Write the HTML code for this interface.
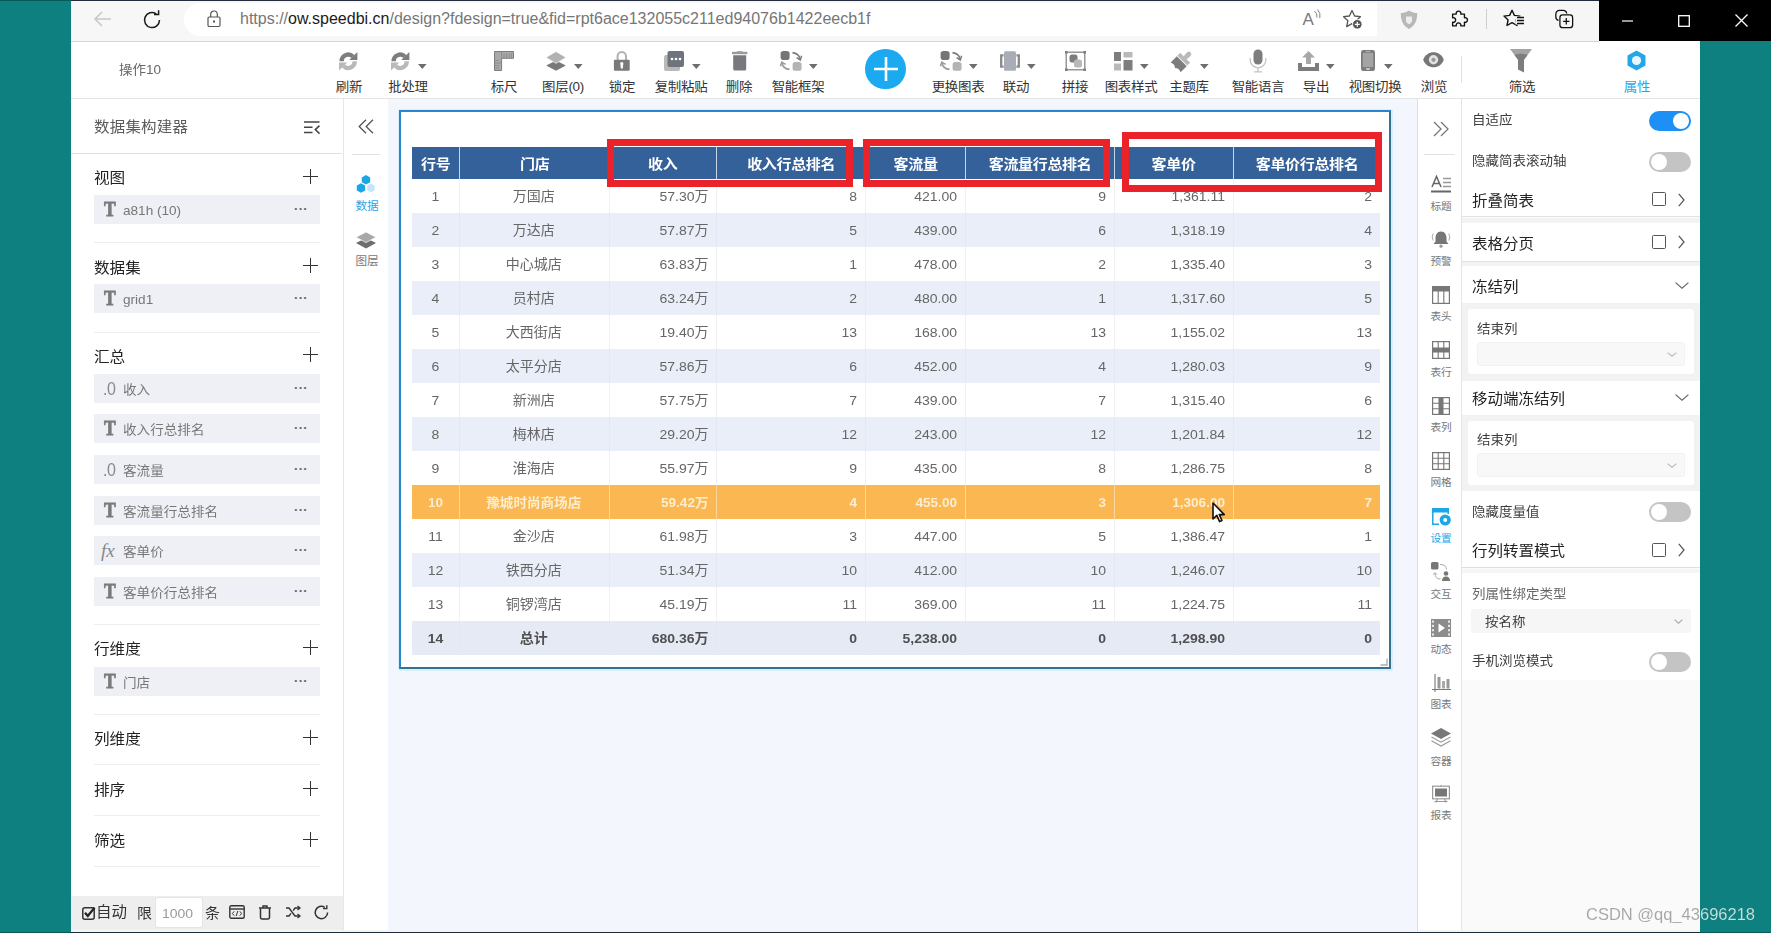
<!DOCTYPE html><html lang="zh"><head><meta charset="utf-8"><title>speedbi design</title><style>
*{box-sizing:border-box;margin:0;padding:0}
html,body{width:1771px;height:933px;overflow:hidden}
body{background:#0f8080;font-family:"Liberation Sans","Noto Sans CJK SC",sans-serif;color:#333;position:relative;font-size:13px}
.abs{position:absolute}
.t{position:absolute;white-space:nowrap;line-height:1}
svg{position:absolute;overflow:visible}
/* toolbar */
.tl{position:absolute;top:79px;font-size:12.64px;color:#333;white-space:nowrap;transform:translateX(-50%) scaleX(1.068);line-height:16px;letter-spacing:-0.3px}
/* left panel */
.sec{position:absolute;left:94px;font-size:14.61px;transform:scaleX(1.068);transform-origin:0 50%;color:#222;line-height:16px;white-space:nowrap}
.plus{position:absolute;left:303px;width:15px;height:15px}
.plus:before{content:"";position:absolute;left:0;top:7px;width:15px;height:1.4px;background:#333}
.plus:after{content:"";position:absolute;top:0;left:7px;height:15px;width:1.4px;background:#333}
.item{position:absolute;left:94px;width:226px;height:29px;background:#eef0f6;font-size:12.73px;color:#777;line-height:29px;white-space:nowrap}
.item .ic{position:absolute;left:10px;top:0;font-family:"Liberation Serif",serif;font-weight:bold;font-size:17.5px;color:#7a7a7a;-webkit-text-stroke:0.7px #7a7a7a;transform:scaleY(1.18);transform-origin:50% 55%}
.item .ic.n{font-family:"Liberation Sans",sans-serif;font-weight:normal;font-size:16px;left:9px;letter-spacing:-0.5px;transform:scaleY(1.15);-webkit-text-stroke:0;color:#888}
.item .ic.f{font-style:italic;font-weight:normal;font-size:19px;left:7px;transform:none;-webkit-text-stroke:0;color:#888}
.item .nm{position:absolute;left:29px;top:1px;transform:scaleX(1.068);transform-origin:0 50%}
.item .dots{position:absolute;left:200px;top:-1px;font-size:13px;color:#666;font-weight:bold;letter-spacing:0.3px}
.hsep{position:absolute;left:94px;width:226px;height:1px;background:#eeeeee}
/* side icon labels */
.sl{position:absolute;font-size:10px;color:#777;white-space:nowrap;transform:translateX(-50%) scaleX(1.068);line-height:12px;letter-spacing:-0.2px}
/* right panel */
.rl{position:absolute;left:1472px;font-size:13px;color:#3c3c3c;transform:scaleX(1.068);transform-origin:0 50%;white-space:nowrap;line-height:16px}
.rl.b{font-size:15px;color:#222}
.tog{position:absolute;left:1649px;width:42px;height:20px;border-radius:10px;background:#c4c4c4}
.tog:after{content:"";position:absolute;left:2px;top:2px;width:16px;height:16px;border-radius:8px;background:#fff}
.tog.on{background:#1e90f5}
.tog.on:after{left:24px}
.cb{position:absolute;left:1652px;width:14px;height:14px;border:1.3px solid #555;border-radius:1.5px;background:#fff}
/* table */
.th{position:absolute;top:147px;height:32px;background:#35619b;color:#fff;font-weight:bold;font-size:14.04px;line-height:35.2px;text-align:center;white-space:nowrap;letter-spacing:-0.3px;overflow:hidden}
.th span{display:inline-block;transform:scaleX(1.068)}
.sx{transform:scaleX(1.068);transform-origin:0 50%}
.tr{position:absolute;left:412px;width:968px;height:33.95px}
.tr.alt{background:#e9eef9}
.tr.hl{background:#fbb752;color:#fdf0d8;font-weight:bold}
.tr.tot{background:#e6eaf5;font-weight:bold;color:#444}
.td{position:absolute;top:0;height:33.95px;line-height:36.6px;overflow:hidden;font-size:13.11px;color:#666;white-space:nowrap}
.tr.hl .td{color:#fdeecf;font-size:12.7px}
.tr.tot .td{color:#505050}
.td.c{text-align:center;transform:scaleX(1.068)}
.td.r{text-align:right;padding-right:7.5px;transform:scaleX(1.068);transform-origin:100% 50%}
.vs{position:absolute;top:0;width:1px;height:33.95px;background:rgba(255,255,255,.55)}
</style></head><body>
<div class="abs" style="left:71px;top:0;width:1629px;height:933px;background:#fff"></div>
<div class="abs" style="left:71px;top:0;width:1528px;height:42px;background:#f7f7f7;border-bottom:1px solid #d6d6d6"></div>
<div class="abs" style="left:0;top:0;width:1771px;height:1px;background:rgba(0,0,0,.3)"></div>
<div class="abs" style="left:71px;top:0;width:1700px;height:1px;background:#232c3c"></div>
<div class="abs" style="left:184px;top:3px;width:1193px;height:33px;background:#fff;border-radius:16px 0 0 16px"></div>
<div class="abs" style="left:1377px;top:1px;width:222px;height:40px;background:#f6f6f6"></div>
<div class="abs" style="left:1599px;top:0;width:172px;height:41px;background:#000"></div>
<div class="t" style="left:240px;top:11.3px;font-size:16px;color:#767676;letter-spacing:0">https://<span style="color:#1a1a1a">ow.speedbi.cn</span>/design?fdesign=true&amp;fid=rpt6ace132055c211ed94076b1422eecb1f</div>
<svg style="left:93px;top:9.5px" width="20" height="18" viewBox="0 0 20 18" ><path d="M9 2 L2 9 L9 16 M2 9 H18" fill="none" stroke="#c8c8c8" stroke-width="1.6"/></svg>
<svg style="left:142px;top:9.5px" width="20" height="20" viewBox="0 0 20 20" ><path d="M17.5 10 A7.5 7.5 0 1 1 14.2 3.8" fill="none" stroke="#1a1a1a" stroke-width="1.5"/><path d="M12 4.6 H16.6 V0.3" fill="none" stroke="#1a1a1a" stroke-width="1.5"/></svg>
<svg style="left:206.5px;top:10px" width="14" height="18" viewBox="0 0 14 18" ><rect x="1" y="7" width="12" height="9.5" rx="1.2" fill="none" stroke="#555" stroke-width="1.2"/><path d="M3.7 7 V4.3 A3.3 3.3 0 0 1 10.3 4.3 V7" fill="none" stroke="#555" stroke-width="1.2"/><rect x="6" y="10.5" width="2" height="2" fill="#555"/></svg>
<div class="t" style="left:1302.5px;top:11px;font-size:17px;color:#7a7a7a">A</div>
<svg style="left:1313px;top:9px" width="8" height="10" viewBox="0 0 8 10" ><path d="M1.5 2 Q4.5 4.5 4 8.5 M4.5 0.5 Q8 4 6.8 9" fill="none" stroke="#808080" stroke-width="1"/></svg>
<svg style="left:1342px;top:9px" width="22" height="22" viewBox="0 0 22 22" ><path d="M10 1.5 L12.6 7 L18.4 7.7 L14.1 11.7 L15.3 17.6 L10 14.6 L4.7 17.6 L5.9 11.7 L1.6 7.7 L7.4 7 Z" fill="none" stroke="#555" stroke-width="1.3" stroke-linejoin="round"/><circle cx="15.3" cy="15.3" r="4.8" fill="#555" stroke="#fff" stroke-width="1"/><path d="M15.3 12.8 V17.8 M12.8 15.3 H17.8" stroke="#fff" stroke-width="1.2"/></svg>
<svg style="left:1400px;top:10px" width="18" height="20" viewBox="0 0 18 20" ><path d="M9 0.5 C6 2.5 3 3 0.8 3 C0.8 10 2.5 15.5 9 19 C15.5 15.5 17.2 10 17.2 3 C15 3 12 2.5 9 0.5 Z" fill="#b8b8b8"/><path d="M6 6.5 H12 V11 Q12 13 9 14.2 Q6 13 6 11 Z" fill="#eee"/></svg>
<svg style="left:1449px;top:10px" width="20" height="20" viewBox="0 0 22 22" ><path d="M4 6.5 H8 A2.6 2.6 0 1 1 13 6.5 H17 V10.5 A2.6 2.6 0 1 1 17 15.5 V19.5 H13 A2.6 2.6 0 1 0 8 19.5 H4 V15.5 A2.6 2.6 0 1 0 4 10.5 Z" fill="none" stroke="#111" stroke-width="1.5" stroke-linejoin="round" transform="translate(0,-2)"/></svg>
<div class="abs" style="left:1486px;top:9px;width:1px;height:20px;background:#cfcfcf"></div>
<svg style="left:1503px;top:9px" width="24" height="20" viewBox="0 0 24 20" ><path d="M9 1.2 L11.4 6.4 L17 7.1 L12.9 10.9 L14 16.5 L9 13.7 L4 16.5 L5.1 10.9 L1 7.1 L6.6 6.4 Z" fill="#f6f6f6" stroke="#111" stroke-width="1.4" stroke-linejoin="round"/><rect x="12.5" y="7.5" width="10" height="8" fill="#f6f6f6"/><path d="M14 8.5 H21 M14 11.5 H21 M14 14.5 H21" stroke="#111" stroke-width="1.4"/></svg>
<svg style="left:1554px;top:9px" width="20" height="20" viewBox="0 0 22 22" ><path d="M5 12.5 A4 4 0 0 1 2 8.5 V5.5 A4 4 0 0 1 6 1.5 H10 A4 4 0 0 1 14 5" fill="none" stroke="#111" stroke-width="1.4"/><rect x="6.5" y="6.5" width="14" height="14" rx="3" fill="#f6f6f6" stroke="#111" stroke-width="1.4"/><path d="M13.5 10 V17 M10 13.5 H17" stroke="#111" stroke-width="1.4"/></svg>
<svg style="left:1621.5px;top:19.5px" width="11" height="2" viewBox="0 0 11 2" ><path d="M0 1 H11" stroke="#fff" stroke-width="1.2"/></svg>
<svg style="left:1678px;top:15px" width="12" height="12" viewBox="0 0 12 12" ><rect x="0.7" y="0.7" width="10.6" height="10.6" fill="none" stroke="#fff" stroke-width="1.3"/></svg>
<svg style="left:1735px;top:14px" width="13" height="13" viewBox="0 0 13 13" ><path d="M0.5 0.5 L12.5 12.5 M12.5 0.5 L0.5 12.5" stroke="#fff" stroke-width="1.3"/></svg>
<div class="abs" style="left:71px;top:98px;width:1629px;height:1px;background:#e4e4e4"></div>
<div class="t sx" style="left:119px;top:64px;font-size:12.65px;color:#666;letter-spacing:0">操作10</div>
<svg style="left:338.8px;top:51.8px" width="20" height="20" viewBox="0 0 20 20" ><g><path d="M2.6 9.3 A6.6 6.6 0 0 1 13.9 4.6" fill="none" stroke="#7d7d7d" stroke-width="4.3"/><path d="M18.4 0 V8 H10.2 Z" fill="#7d7d7d"/></g><g transform="rotate(180 9.2 9.3)"><path d="M2.6 9.3 A6.6 6.6 0 0 1 13.9 4.6" fill="none" stroke="#b9b9b9" stroke-width="4.3"/><path d="M18.4 0 V8 H10.2 Z" fill="#b9b9b9"/></g></svg>
<div class="tl" style="left:348.5px">刷新</div>
<svg style="left:390.8px;top:51.8px" width="20" height="20" viewBox="0 0 20 20" ><g><path d="M2.6 9.3 A6.6 6.6 0 0 1 13.9 4.6" fill="none" stroke="#7d7d7d" stroke-width="4.3"/><path d="M18.4 0 V8 H10.2 Z" fill="#7d7d7d"/></g><g transform="rotate(180 9.2 9.3)"><path d="M2.6 9.3 A6.6 6.6 0 0 1 13.9 4.6" fill="none" stroke="#b9b9b9" stroke-width="4.3"/><path d="M18.4 0 V8 H10.2 Z" fill="#b9b9b9"/></g></svg>
<svg style="left:417.7px;top:64.2px" width="8.6" height="5" viewBox="0 0 8.6 5" ><path d="M0 0 H8.6 L4.3 5 Z" fill="#6e6e6e"/></svg>
<div class="tl" style="left:408px">批处理</div>
<svg style="left:494px;top:51px" width="20" height="20" viewBox="0 0 20 20" ><path d="M0.5 0.5 H19.5 V7.3 H7.6 V19.5 H0.5 Z" fill="#a9a9a9" stroke="#7e7e7e" stroke-width="1"/><g stroke="#8a8a8a" stroke-width="0.9"><path d="M7.5 1 V7 M10 2.5 V7 M12.5 2.5 V7 M15 2.5 V7 M17.5 2.5 V7 M1 9.5 H5 M1 12 H7 M1 14.5 H5 M1 17 H5"/></g></svg>
<div class="tl" style="left:504px">标尺</div>
<svg style="left:546px;top:51px" width="20" height="20" viewBox="0 0 20 20" ><path d="M10 9.5 L19.8 14.5 L10 19.8 L0.2 14.5 Z" fill="#787878"/><path d="M10 0.6 L20 6.4 L10 12.4 L0 6.4 Z" fill="#b2b2b2" stroke="#fff" stroke-width="0.6"/></svg>
<svg style="left:573.7px;top:64.2px" width="8.6" height="5" viewBox="0 0 8.6 5" ><path d="M0 0 H8.6 L4.3 5 Z" fill="#6e6e6e"/></svg>
<div class="tl" style="left:563px">图层(0)</div>
<svg style="left:613px;top:50px" width="18" height="21" viewBox="0 0 18 21" ><path d="M4.6 10 V6.2 A4.2 4.2 0 0 1 13 6.2 V10" fill="none" stroke="#b0b0b0" stroke-width="2"/><rect x="0.9" y="9.7" width="15.8" height="11" rx="1" fill="#7a7a7a"/><path d="M8.8 12 C10 12 10.3 12.8 10.3 13.6 L9.8 18.6 H7.8 L7.3 13.6 C7.3 12.8 7.6 12 8.8 12 Z" fill="#fff"/></svg>
<div class="tl" style="left:621.5px">锁定</div>
<svg style="left:664px;top:51px" width="20" height="20" viewBox="0 0 20 20" ><rect x="0" y="4" width="16" height="16" rx="2" fill="#b9b9b9"/><rect x="3.5" y="0" width="16.5" height="16" rx="2" fill="#6f737d"/><circle cx="8" cy="8" r="1.3" fill="#fff"/><circle cx="12" cy="8" r="1.3" fill="#fff"/><circle cx="16" cy="8" r="1.3" fill="#fff"/></svg>
<svg style="left:691.7px;top:64.2px" width="8.6" height="5" viewBox="0 0 8.6 5" ><path d="M0 0 H8.6 L4.3 5 Z" fill="#6e6e6e"/></svg>
<div class="tl" style="left:681px">复制粘贴</div>
<svg style="left:731.6px;top:51px" width="16" height="20" viewBox="0 0 16 20" ><rect x="0" y="0.8" width="15.4" height="2.4" fill="#9a9a9a"/><rect x="5" y="0" width="5.4" height="1.2" fill="#a8a8a8"/><path d="M1.2 4.2 H14.2 V18 A1.5 1.5 0 0 1 12.7 19.5 H2.7 A1.5 1.5 0 0 1 1.2 18 Z" fill="#77797c"/></svg>
<div class="tl" style="left:739px">删除</div>
<svg style="left:780px;top:51px" width="22" height="20" viewBox="0 0 22 20" ><rect x="0.6" y="0" width="9" height="9" rx="2.8" fill="#757575"/><rect x="12.6" y="11" width="9" height="8.8" rx="2.6" fill="#b4b4b4"/><path d="M12.5 1.6 Q19 2.4 20 8.2" fill="none" stroke="#7d7d7d" stroke-width="1.6"/><path d="M16.6 6.6 L20.3 9 L21.6 4.8" fill="none" stroke="#7d7d7d" stroke-width="1.5"/><path d="M9.6 18.4 Q3 17.8 2 12" fill="none" stroke="#9a9a9a" stroke-width="1.6"/><path d="M0.4 15.2 L1.8 11.2 L5.6 13.4" fill="none" stroke="#9a9a9a" stroke-width="1.5"/></svg>
<svg style="left:809.2px;top:64.2px" width="8.6" height="5" viewBox="0 0 8.6 5" ><path d="M0 0 H8.6 L4.3 5 Z" fill="#6e6e6e"/></svg>
<div class="tl" style="left:798px">智能框架</div>
<div class="abs" style="left:865px;top:48.5px;width:41px;height:40.5px;border-radius:20.5px;background:#1ba9f0"></div>
<svg style="left:872.5px;top:56px" width="26" height="26" viewBox="0 0 26 26" ><path d="M13 1 V25 M1 13 H25" stroke="#fff" stroke-width="2.6"/></svg>
<svg style="left:940px;top:51px" width="22" height="20" viewBox="0 0 22 20" ><rect x="0.6" y="0" width="9" height="9" rx="2.8" fill="#757575"/><rect x="12.6" y="11" width="9" height="8.8" rx="2.6" fill="#b4b4b4"/><path d="M12.5 1.6 Q19 2.4 20 8.2" fill="none" stroke="#7d7d7d" stroke-width="1.6"/><path d="M16.6 6.6 L20.3 9 L21.6 4.8" fill="none" stroke="#7d7d7d" stroke-width="1.5"/><path d="M9.6 18.4 Q3 17.8 2 12" fill="none" stroke="#9a9a9a" stroke-width="1.6"/><path d="M0.4 15.2 L1.8 11.2 L5.6 13.4" fill="none" stroke="#9a9a9a" stroke-width="1.5"/></svg>
<svg style="left:968.7px;top:64.2px" width="8.6" height="5" viewBox="0 0 8.6 5" ><path d="M0 0 H8.6 L4.3 5 Z" fill="#6e6e6e"/></svg>
<div class="tl" style="left:957.5px">更换图表</div>
<svg style="left:1000px;top:51px" width="20" height="20" viewBox="0 0 20 20" ><rect x="4" y="0.3" width="12" height="19.4" rx="1.5" fill="#a9adb5"/><path d="M3.6 4.4 H1.2 V15.6 H3.6 M16.4 4.4 H18.8 V15.6 H16.4" fill="none" stroke="#8a8a8a" stroke-width="2.3"/></svg>
<svg style="left:1027.2px;top:64.2px" width="8.6" height="5" viewBox="0 0 8.6 5" ><path d="M0 0 H8.6 L4.3 5 Z" fill="#6e6e6e"/></svg>
<div class="tl" style="left:1016px">联动</div>
<svg style="left:1065px;top:51px" width="21" height="20" viewBox="0 0 21 20" ><rect x="1.2" y="1.2" width="18.6" height="17.6" fill="none" stroke="#7d7d7d" stroke-width="1.2"/><rect x="4.5" y="3.5" width="8" height="8" rx="2.5" fill="#7d7d7d"/><rect x="9" y="8.5" width="8" height="8" rx="2.5" fill="#b9b9b9"/><g fill="#7d7d7d"><rect x="0" y="0" width="2.6" height="2.6"/><rect x="18.4" y="0" width="2.6" height="2.6"/><rect x="0" y="17.4" width="2.6" height="2.6"/><rect x="18.4" y="17.4" width="2.6" height="2.6"/></g></svg>
<div class="tl" style="left:1075px">拼接</div>
<svg style="left:1114px;top:52px" width="19" height="19" viewBox="0 0 19 19" ><rect x="0" y="0" width="7" height="9" fill="#7d7d7d"/><rect x="9.5" y="0" width="9" height="5.5" fill="#b9b9b9"/><rect x="0" y="11.5" width="7" height="7" fill="#b9b9b9"/><rect x="9.5" y="8" width="9" height="10.5" fill="#7d7d7d"/></svg>
<svg style="left:1140.2px;top:64.2px" width="8.6" height="5" viewBox="0 0 8.6 5" ><path d="M0 0 H8.6 L4.3 5 Z" fill="#6e6e6e"/></svg>
<div class="tl" style="left:1131px">图表样式</div>
<svg style="left:1171px;top:50px" width="22" height="22" viewBox="0 0 22 22" ><g transform="rotate(45 11 11)"><rect x="8.6" y="-1" width="4.8" height="8" rx="2.2" fill="#b9b9b9"/><rect x="4" y="6.5" width="14" height="4" fill="#b9b9b9"/><path d="M4 11.3 H18 V20 Q14 18 11 21 Q8 18 4 20 Z" fill="#7d7d7d"/></g></svg>
<svg style="left:1199.7px;top:64.2px" width="8.6" height="5" viewBox="0 0 8.6 5" ><path d="M0 0 H8.6 L4.3 5 Z" fill="#6e6e6e"/></svg>
<div class="tl" style="left:1189px">主题库</div>
<svg style="left:1249px;top:49px" width="18" height="24" viewBox="0 0 18 24" ><rect x="4.5" y="0.5" width="9" height="15" rx="4.5" fill="#7d7d7d"/><path d="M1.2 9 V11 A7.8 7.8 0 0 0 16.8 11 V9" fill="none" stroke="#c4c4c4" stroke-width="1.3"/><path d="M9 19 V22.5 M5 22.8 H13" stroke="#c4c4c4" stroke-width="1.3"/></svg>
<div class="tl" style="left:1258px">智能语言</div>
<svg style="left:1298px;top:51px" width="21" height="20" viewBox="0 0 21 20" ><path d="M0 12 H4 V16 H17 V12 H21 V20 H0 Z" fill="#7d7d7d"/><path d="M10.5 0 L17 6.5 H13 V13 H8 V6.5 H4 Z" fill="#a8a8a8"/></svg>
<svg style="left:1326.2px;top:64.2px" width="8.6" height="5" viewBox="0 0 8.6 5" ><path d="M0 0 H8.6 L4.3 5 Z" fill="#6e6e6e"/></svg>
<div class="tl" style="left:1315.5px">导出</div>
<svg style="left:1361px;top:50px" width="14" height="21" viewBox="0 0 14 21" ><rect x="0" y="0" width="14" height="21" rx="2.2" fill="#7d7d7d"/><rect x="1.8" y="3" width="10.4" height="14" fill="#a4a4a4"/><rect x="5" y="18.2" width="4" height="1.6" rx="0.8" fill="#ddd"/><rect x="4.5" y="1.2" width="5" height="0.9" fill="#bbb"/></svg>
<svg style="left:1384.2px;top:64.2px" width="8.6" height="5" viewBox="0 0 8.6 5" ><path d="M0 0 H8.6 L4.3 5 Z" fill="#6e6e6e"/></svg>
<div class="tl" style="left:1374.5px">视图切换</div>
<svg style="left:1422.5px;top:52.3px" width="21" height="16" viewBox="0 0 21 16" ><path d="M0.2 7.8 C3.5 -2.2 17.5 -2.2 20.8 7.8 C17.5 17.8 3.5 17.8 0.2 7.8 Z" fill="#777"/><circle cx="10.5" cy="7.8" r="4.7" fill="#e2e2e2"/><circle cx="10.5" cy="7.8" r="2.1" fill="#9a9a9a"/></svg>
<div class="tl" style="left:1433.5px">浏览</div>
<div class="abs" style="left:1461px;top:56px;width:1px;height:27px;background:#e0e0e0"></div>
<svg style="left:1510px;top:49px" width="22" height="24" viewBox="0 0 22 24" ><path d="M0 0 H22 L16 8 H6 Z" fill="#a4a4a4"/><path d="M4.5 6 Q11 3.5 17.5 6 L14 11 V23.5 L8 20.5 V11 Z" fill="#7d7d7d"/></svg>
<div class="tl" style="left:1521.5px">筛选</div>
<svg style="left:1627px;top:50px" width="19" height="21" viewBox="0 0 19 21" ><path d="M9.5 0.5 L18.5 5.5 V15.5 L9.5 20.5 L0.5 15.5 V5.5 Z" fill="#22a7ea"/><circle cx="9.5" cy="10.5" r="4.6" fill="#e8f6fd"/></svg>
<div class="tl" style="left:1636.5px;color:#2aa6e6">属性</div>
<div class="abs" style="left:343px;top:99px;width:1px;height:834px;background:#e6e6e6"></div>
<div class="abs" style="left:71px;top:153px;width:271px;height:1px;background:#e2e2e2"></div>
<div class="t sx" style="left:94px;top:119.5px;font-size:14.5px;color:#5a5a5a;letter-spacing:0.2px">数据集构建器</div>
<svg style="left:304px;top:121px" width="16" height="13" viewBox="0 0 16 13" ><path d="M0 1 H15.5 M0 6.3 H8.5 M0 11.6 H8.5" stroke="#444" stroke-width="1.5" fill="none"/><path d="M15.5 4.6 L11.3 8.6 L15.5 12.6" stroke="#444" stroke-width="1.5" fill="none"/></svg>
<div class="sec" style="top:170.2px">视图</div><div class="plus" style="top:168.5px"></div>
<div class="item" style="top:194.5px"><span class="ic">T</span><span class="nm">a81h (10)</span><span class="dots">···</span></div>
<div class="hsep" style="top:242px"></div>
<div class="sec" style="top:259.7px">数据集</div><div class="plus" style="top:258px"></div>
<div class="item" style="top:284px"><span class="ic">T</span><span class="nm">grid1</span><span class="dots">···</span></div>
<div class="hsep" style="top:332px"></div>
<div class="sec" style="top:348.7px">汇总</div><div class="plus" style="top:347px"></div>
<div class="item" style="top:373.5px"><span class="ic n">.0</span><span class="nm">收入</span><span class="dots">···</span></div>
<div class="item" style="top:414px"><span class="ic">T</span><span class="nm">收入行总排名</span><span class="dots">···</span></div>
<div class="item" style="top:455px"><span class="ic n">.0</span><span class="nm">客流量</span><span class="dots">···</span></div>
<div class="item" style="top:495.5px"><span class="ic">T</span><span class="nm">客流量行总排名</span><span class="dots">···</span></div>
<div class="item" style="top:536px"><span class="ic f">fx</span><span class="nm">客单价</span><span class="dots">···</span></div>
<div class="item" style="top:577px"><span class="ic">T</span><span class="nm">客单价行总排名</span><span class="dots">···</span></div>
<div class="hsep" style="top:624px"></div>
<div class="sec" style="top:641.2px">行维度</div><div class="plus" style="top:639.5px"></div>
<div class="item" style="top:666.5px"><span class="ic">T</span><span class="nm">门店</span><span class="dots">···</span></div>
<div class="hsep" style="top:714px"></div>
<div class="sec" style="top:731.2px">列维度</div><div class="plus" style="top:729.5px"></div>
<div class="hsep" style="top:764px"></div>
<div class="sec" style="top:782.2px">排序</div><div class="plus" style="top:780.5px"></div>
<div class="hsep" style="top:815px"></div>
<div class="sec" style="top:833.2px">筛选</div><div class="plus" style="top:831.5px"></div>
<div class="hsep" style="top:866px"></div>
<div class="abs" style="left:71px;top:896px;width:272px;height:36px;background:#eeeeee"></div>
<div class="abs" style="left:71px;top:930px;width:1628px;height:3px;background:#f4f4f4"></div>
<svg style="left:82px;top:906.5px" width="13" height="13" viewBox="0 0 13 13" ><rect x="0.8" y="0.8" width="11.4" height="11.4" rx="2" fill="none" stroke="#333" stroke-width="1.5"/><path d="M3 5.8 L5.8 9 L12.6 0.6" fill="none" stroke="#222" stroke-width="2.3"/></svg>
<div class="t sx" style="left:96px;top:905px;font-size:14.5px;color:#333">自动</div>
<div class="t sx" style="left:137px;top:905.5px;font-size:14px;color:#333">限</div>
<div class="abs" style="left:155px;top:897px;width:48px;height:31px;background:#fff;border:1px solid #e4e4e4;border-radius:3px"></div>
<div class="t sx" style="left:162px;top:906.5px;font-size:13.1px;color:#999">1000</div>
<div class="t sx" style="left:205px;top:905.5px;font-size:14px;color:#333">条</div>
<svg style="left:229px;top:905px" width="16" height="14" viewBox="0 0 16 14" ><rect x="0.8" y="0.8" width="14.4" height="12.4" rx="1.5" fill="none" stroke="#333" stroke-width="1.4"/><path d="M0.8 4 H15.2" stroke="#333" stroke-width="1.4"/><path d="M5.2 6.3 L3.4 8.5 L5.2 10.7 M10.8 6.3 L12.6 8.5 L10.8 10.7 M8.8 6 L7.2 11" stroke="#333" stroke-width="1" fill="none"/></svg>
<svg style="left:259px;top:905px" width="12" height="15" viewBox="0 0 12 15" ><path d="M0 3 H12 M4 3 V1 H8 V3" stroke="#333" stroke-width="1.4" fill="none"/><path d="M1.5 3.5 V12.5 A1.5 1.5 0 0 0 3 14 H9 A1.5 1.5 0 0 0 10.5 12.5 V3.5" stroke="#333" stroke-width="1.5" fill="none"/></svg>
<svg style="left:286px;top:906px" width="15" height="12" viewBox="0 0 15 12" ><path d="M0 2 H3 L9 10 H13 M0 10 H3 L5 7.4 M7.2 4.6 L9 2 H13" stroke="#333" stroke-width="1.4" fill="none"/><path d="M11.5 0 L14 2 L11.5 4 M11.5 8 L14 10 L11.5 12" stroke="#333" stroke-width="1.3" fill="none"/></svg>
<svg style="left:314px;top:905px" width="15" height="15" viewBox="0 0 15 15" ><path d="M13.6 7.5 A6.2 6.2 0 1 1 10.8 2.3" fill="none" stroke="#333" stroke-width="1.5"/><path d="M9 2.6 H12.8 V-0.8" fill="none" stroke="#333" stroke-width="1.4" transform="translate(0,1)"/></svg>
<div class="abs" style="left:352px;top:154px;width:28px;height:1px;background:#e2e2e2"></div>
<svg style="left:358px;top:119px" width="16" height="15" viewBox="0 0 16 15" ><path d="M8 0.8 L1.2 7.5 L8 14.2 M15 0.8 L8.2 7.5 L15 14.2" fill="none" stroke="#555" stroke-width="1.3"/></svg>
<svg style="left:356px;top:175px" width="20" height="18" viewBox="0 0 20 18" ><path d="M10.0 0.0 L14.2 2.4 L14.2 7.2 L10.0 9.6 L5.8 7.2 L5.8 2.4 Z" fill="#1aa7e6"/><path d="M5.0 8.2 L9.2 10.6 L9.2 15.4 L5.0 17.8 L0.8 15.4 L0.8 10.6 Z" fill="#1aa7e6"/><path d="M15.0 8.6 L18.8 10.8 L18.8 15.2 L15.0 17.4 L11.2 15.2 L11.2 10.8 Z" fill="#c4e6f8"/></svg>
<div class="sl" style="left:366.5px;top:200px;color:#2aa6e6;font-size:10.9px">数据</div>
<svg style="left:356px;top:232px" width="20" height="17" viewBox="0 0 20 17" ><path d="M10 6 L20 11 L10 16.5 L0 11 Z" fill="#6e6e6e"/><path d="M10 0 L20 5.2 L10 10.6 L0 5.2 Z" fill="#a8a8a8" stroke="#fff" stroke-width="0.7"/></svg>
<div class="sl" style="left:366.5px;top:255px;font-size:10.9px">图层</div>
<div class="abs" style="left:388px;top:99px;width:1029px;height:831px;background:#f4f6fd"></div>
<div class="abs" style="left:397.5px;top:108.5px;width:995px;height:562px;background:#d9edfb;border-radius:2px"></div>
<div class="abs" style="left:399px;top:110px;width:992px;height:559px;background:#fff;border:2px solid;border-color:#2a86cb #34728f #34728f #2a86cb"></div>
<div class="th" style="left:412px;width:47px;"><span>行号</span></div>
<div class="th" style="left:459px;width:149.5px;border-left:1px solid #c9d6e8;"><span>门店</span></div>
<div class="th" style="left:608.5px;width:107.5px;border-left:1px solid #c9d6e8;"><span>收入</span></div>
<div class="th" style="left:716px;width:149px;border-left:1px solid #c9d6e8;"><span>收入行总排名</span></div>
<div class="th" style="left:865px;width:100px;border-left:1px solid #c9d6e8;"><span>客流量</span></div>
<div class="th" style="left:965px;width:149px;border-left:1px solid #c9d6e8;"><span>客流量行总排名</span></div>
<div class="th" style="left:1114px;width:119px;border-left:1px solid #c9d6e8;"><span>客单价</span></div>
<div class="th" style="left:1233px;width:147px;border-left:1px solid #c9d6e8;"><span>客单价行总排名</span></div>
<div class="tr" style="top:179.35px"><div class="td c" style="left:0px;width:47px">1</div><div class="td c" style="left:47px;width:149.5px">万国店</div><div class="td r" style="left:196.5px;width:107.5px">57.30万</div><div class="td r" style="left:304px;width:149px">8</div><div class="td r" style="left:453px;width:100px">421.00</div><div class="td r" style="left:553px;width:149px">9</div><div class="td r" style="left:702px;width:119px">1,361.11</div><div class="td r" style="left:821px;width:147px">2</div><div class="vs" style="left:47px;background:#f1f1f3"></div><div class="vs" style="left:196.5px;background:#f1f1f3"></div><div class="vs" style="left:304px;background:#f1f1f3"></div><div class="vs" style="left:453px;background:#f1f1f3"></div><div class="vs" style="left:553px;background:#f1f1f3"></div><div class="vs" style="left:702px;background:#f1f1f3"></div><div class="vs" style="left:821px;background:#f1f1f3"></div></div>
<div class="tr alt" style="top:213.3px"><div class="td c" style="left:0px;width:47px">2</div><div class="td c" style="left:47px;width:149.5px">万达店</div><div class="td r" style="left:196.5px;width:107.5px">57.87万</div><div class="td r" style="left:304px;width:149px">5</div><div class="td r" style="left:453px;width:100px">439.00</div><div class="td r" style="left:553px;width:149px">6</div><div class="td r" style="left:702px;width:119px">1,318.19</div><div class="td r" style="left:821px;width:147px">4</div><div class="vs" style="left:47px;background:#e3e8f3"></div><div class="vs" style="left:196.5px;background:#e3e8f3"></div><div class="vs" style="left:304px;background:#e3e8f3"></div><div class="vs" style="left:453px;background:#e3e8f3"></div><div class="vs" style="left:553px;background:#e3e8f3"></div><div class="vs" style="left:702px;background:#e3e8f3"></div><div class="vs" style="left:821px;background:#e3e8f3"></div></div>
<div class="tr" style="top:247.25px"><div class="td c" style="left:0px;width:47px">3</div><div class="td c" style="left:47px;width:149.5px">中心城店</div><div class="td r" style="left:196.5px;width:107.5px">63.83万</div><div class="td r" style="left:304px;width:149px">1</div><div class="td r" style="left:453px;width:100px">478.00</div><div class="td r" style="left:553px;width:149px">2</div><div class="td r" style="left:702px;width:119px">1,335.40</div><div class="td r" style="left:821px;width:147px">3</div><div class="vs" style="left:47px;background:#f1f1f3"></div><div class="vs" style="left:196.5px;background:#f1f1f3"></div><div class="vs" style="left:304px;background:#f1f1f3"></div><div class="vs" style="left:453px;background:#f1f1f3"></div><div class="vs" style="left:553px;background:#f1f1f3"></div><div class="vs" style="left:702px;background:#f1f1f3"></div><div class="vs" style="left:821px;background:#f1f1f3"></div></div>
<div class="tr alt" style="top:281.2px"><div class="td c" style="left:0px;width:47px">4</div><div class="td c" style="left:47px;width:149.5px">员村店</div><div class="td r" style="left:196.5px;width:107.5px">63.24万</div><div class="td r" style="left:304px;width:149px">2</div><div class="td r" style="left:453px;width:100px">480.00</div><div class="td r" style="left:553px;width:149px">1</div><div class="td r" style="left:702px;width:119px">1,317.60</div><div class="td r" style="left:821px;width:147px">5</div><div class="vs" style="left:47px;background:#e3e8f3"></div><div class="vs" style="left:196.5px;background:#e3e8f3"></div><div class="vs" style="left:304px;background:#e3e8f3"></div><div class="vs" style="left:453px;background:#e3e8f3"></div><div class="vs" style="left:553px;background:#e3e8f3"></div><div class="vs" style="left:702px;background:#e3e8f3"></div><div class="vs" style="left:821px;background:#e3e8f3"></div></div>
<div class="tr" style="top:315.15px"><div class="td c" style="left:0px;width:47px">5</div><div class="td c" style="left:47px;width:149.5px">大西街店</div><div class="td r" style="left:196.5px;width:107.5px">19.40万</div><div class="td r" style="left:304px;width:149px">13</div><div class="td r" style="left:453px;width:100px">168.00</div><div class="td r" style="left:553px;width:149px">13</div><div class="td r" style="left:702px;width:119px">1,155.02</div><div class="td r" style="left:821px;width:147px">13</div><div class="vs" style="left:47px;background:#f1f1f3"></div><div class="vs" style="left:196.5px;background:#f1f1f3"></div><div class="vs" style="left:304px;background:#f1f1f3"></div><div class="vs" style="left:453px;background:#f1f1f3"></div><div class="vs" style="left:553px;background:#f1f1f3"></div><div class="vs" style="left:702px;background:#f1f1f3"></div><div class="vs" style="left:821px;background:#f1f1f3"></div></div>
<div class="tr alt" style="top:349.1px"><div class="td c" style="left:0px;width:47px">6</div><div class="td c" style="left:47px;width:149.5px">太平分店</div><div class="td r" style="left:196.5px;width:107.5px">57.86万</div><div class="td r" style="left:304px;width:149px">6</div><div class="td r" style="left:453px;width:100px">452.00</div><div class="td r" style="left:553px;width:149px">4</div><div class="td r" style="left:702px;width:119px">1,280.03</div><div class="td r" style="left:821px;width:147px">9</div><div class="vs" style="left:47px;background:#e3e8f3"></div><div class="vs" style="left:196.5px;background:#e3e8f3"></div><div class="vs" style="left:304px;background:#e3e8f3"></div><div class="vs" style="left:453px;background:#e3e8f3"></div><div class="vs" style="left:553px;background:#e3e8f3"></div><div class="vs" style="left:702px;background:#e3e8f3"></div><div class="vs" style="left:821px;background:#e3e8f3"></div></div>
<div class="tr" style="top:383.05px"><div class="td c" style="left:0px;width:47px">7</div><div class="td c" style="left:47px;width:149.5px">新洲店</div><div class="td r" style="left:196.5px;width:107.5px">57.75万</div><div class="td r" style="left:304px;width:149px">7</div><div class="td r" style="left:453px;width:100px">439.00</div><div class="td r" style="left:553px;width:149px">7</div><div class="td r" style="left:702px;width:119px">1,315.40</div><div class="td r" style="left:821px;width:147px">6</div><div class="vs" style="left:47px;background:#f1f1f3"></div><div class="vs" style="left:196.5px;background:#f1f1f3"></div><div class="vs" style="left:304px;background:#f1f1f3"></div><div class="vs" style="left:453px;background:#f1f1f3"></div><div class="vs" style="left:553px;background:#f1f1f3"></div><div class="vs" style="left:702px;background:#f1f1f3"></div><div class="vs" style="left:821px;background:#f1f1f3"></div></div>
<div class="tr alt" style="top:417.0px"><div class="td c" style="left:0px;width:47px">8</div><div class="td c" style="left:47px;width:149.5px">梅林店</div><div class="td r" style="left:196.5px;width:107.5px">29.20万</div><div class="td r" style="left:304px;width:149px">12</div><div class="td r" style="left:453px;width:100px">243.00</div><div class="td r" style="left:553px;width:149px">12</div><div class="td r" style="left:702px;width:119px">1,201.84</div><div class="td r" style="left:821px;width:147px">12</div><div class="vs" style="left:47px;background:#e3e8f3"></div><div class="vs" style="left:196.5px;background:#e3e8f3"></div><div class="vs" style="left:304px;background:#e3e8f3"></div><div class="vs" style="left:453px;background:#e3e8f3"></div><div class="vs" style="left:553px;background:#e3e8f3"></div><div class="vs" style="left:702px;background:#e3e8f3"></div><div class="vs" style="left:821px;background:#e3e8f3"></div></div>
<div class="tr" style="top:450.95px"><div class="td c" style="left:0px;width:47px">9</div><div class="td c" style="left:47px;width:149.5px">淮海店</div><div class="td r" style="left:196.5px;width:107.5px">55.97万</div><div class="td r" style="left:304px;width:149px">9</div><div class="td r" style="left:453px;width:100px">435.00</div><div class="td r" style="left:553px;width:149px">8</div><div class="td r" style="left:702px;width:119px">1,286.75</div><div class="td r" style="left:821px;width:147px">8</div><div class="vs" style="left:47px;background:#f1f1f3"></div><div class="vs" style="left:196.5px;background:#f1f1f3"></div><div class="vs" style="left:304px;background:#f1f1f3"></div><div class="vs" style="left:453px;background:#f1f1f3"></div><div class="vs" style="left:553px;background:#f1f1f3"></div><div class="vs" style="left:702px;background:#f1f1f3"></div><div class="vs" style="left:821px;background:#f1f1f3"></div></div>
<div class="tr hl" style="top:484.9px"><div class="td c" style="left:0px;width:47px">10</div><div class="td c" style="left:47px;width:149.5px">豫城时尚商场店</div><div class="td r" style="left:196.5px;width:107.5px">59.42万</div><div class="td r" style="left:304px;width:149px">4</div><div class="td r" style="left:453px;width:100px">455.00</div><div class="td r" style="left:553px;width:149px">3</div><div class="td r" style="left:702px;width:119px">1,306.00</div><div class="td r" style="left:821px;width:147px">7</div><div class="vs" style="left:47px;background:rgba(255,255,255,.45)"></div><div class="vs" style="left:196.5px;background:rgba(255,255,255,.45)"></div><div class="vs" style="left:304px;background:rgba(255,255,255,.45)"></div><div class="vs" style="left:453px;background:rgba(255,255,255,.45)"></div><div class="vs" style="left:553px;background:rgba(255,255,255,.45)"></div><div class="vs" style="left:702px;background:rgba(255,255,255,.45)"></div><div class="vs" style="left:821px;background:rgba(255,255,255,.45)"></div></div>
<div class="tr" style="top:518.85px"><div class="td c" style="left:0px;width:47px">11</div><div class="td c" style="left:47px;width:149.5px">金沙店</div><div class="td r" style="left:196.5px;width:107.5px">61.98万</div><div class="td r" style="left:304px;width:149px">3</div><div class="td r" style="left:453px;width:100px">447.00</div><div class="td r" style="left:553px;width:149px">5</div><div class="td r" style="left:702px;width:119px">1,386.47</div><div class="td r" style="left:821px;width:147px">1</div><div class="vs" style="left:47px;background:#f1f1f3"></div><div class="vs" style="left:196.5px;background:#f1f1f3"></div><div class="vs" style="left:304px;background:#f1f1f3"></div><div class="vs" style="left:453px;background:#f1f1f3"></div><div class="vs" style="left:553px;background:#f1f1f3"></div><div class="vs" style="left:702px;background:#f1f1f3"></div><div class="vs" style="left:821px;background:#f1f1f3"></div></div>
<div class="tr alt" style="top:552.8px"><div class="td c" style="left:0px;width:47px">12</div><div class="td c" style="left:47px;width:149.5px">铁西分店</div><div class="td r" style="left:196.5px;width:107.5px">51.34万</div><div class="td r" style="left:304px;width:149px">10</div><div class="td r" style="left:453px;width:100px">412.00</div><div class="td r" style="left:553px;width:149px">10</div><div class="td r" style="left:702px;width:119px">1,246.07</div><div class="td r" style="left:821px;width:147px">10</div><div class="vs" style="left:47px;background:#e3e8f3"></div><div class="vs" style="left:196.5px;background:#e3e8f3"></div><div class="vs" style="left:304px;background:#e3e8f3"></div><div class="vs" style="left:453px;background:#e3e8f3"></div><div class="vs" style="left:553px;background:#e3e8f3"></div><div class="vs" style="left:702px;background:#e3e8f3"></div><div class="vs" style="left:821px;background:#e3e8f3"></div></div>
<div class="tr" style="top:586.75px"><div class="td c" style="left:0px;width:47px">13</div><div class="td c" style="left:47px;width:149.5px">铜锣湾店</div><div class="td r" style="left:196.5px;width:107.5px">45.19万</div><div class="td r" style="left:304px;width:149px">11</div><div class="td r" style="left:453px;width:100px">369.00</div><div class="td r" style="left:553px;width:149px">11</div><div class="td r" style="left:702px;width:119px">1,224.75</div><div class="td r" style="left:821px;width:147px">11</div><div class="vs" style="left:47px;background:#f1f1f3"></div><div class="vs" style="left:196.5px;background:#f1f1f3"></div><div class="vs" style="left:304px;background:#f1f1f3"></div><div class="vs" style="left:453px;background:#f1f1f3"></div><div class="vs" style="left:553px;background:#f1f1f3"></div><div class="vs" style="left:702px;background:#f1f1f3"></div><div class="vs" style="left:821px;background:#f1f1f3"></div></div>
<div class="tr tot" style="top:620.7px"><div class="td c" style="left:0px;width:47px">14</div><div class="td c" style="left:47px;width:149.5px">总计</div><div class="td r" style="left:196.5px;width:107.5px">680.36万</div><div class="td r" style="left:304px;width:149px">0</div><div class="td r" style="left:453px;width:100px">5,238.00</div><div class="td r" style="left:553px;width:149px">0</div><div class="td r" style="left:702px;width:119px">1,298.90</div><div class="td r" style="left:821px;width:147px">0</div><div class="vs" style="left:47px;background:#e3e8f3"></div><div class="vs" style="left:196.5px;background:#e3e8f3"></div><div class="vs" style="left:304px;background:#e3e8f3"></div><div class="vs" style="left:453px;background:#e3e8f3"></div><div class="vs" style="left:553px;background:#e3e8f3"></div><div class="vs" style="left:702px;background:#e3e8f3"></div><div class="vs" style="left:821px;background:#e3e8f3"></div></div>
<div class="abs" style="left:607px;top:139px;width:246px;height:47.5px;border:7px solid #ea232b"></div>
<div class="abs" style="left:862.5px;top:139px;width:247.0px;height:47.5px;border:7px solid #ea232b"></div>
<div class="abs" style="left:1122px;top:132px;width:260px;height:60.19999999999999px;border:7.3px solid #ea232b"></div>
<svg style="left:1380px;top:658px" width="8" height="8" viewBox="0 0 8 8" ><path d="M7 0.5 V7 H0.5" fill="none" stroke="#a9adb3" stroke-width="1.3"/></svg>
<svg style="left:1212px;top:501.5px" width="13" height="21" viewBox="0 0 13 21" ><path d="M1 1 V17 L4.8 13.4 L7.6 19.6 L10 18.5 L7.3 12.6 H12.3 Z" fill="#fff" stroke="#111" stroke-width="1.6" stroke-linejoin="round"/></svg>
<div class="abs" style="left:1417px;top:99px;width:1px;height:832px;background:#dddfe5"></div>
<div class="abs" style="left:1461px;top:99px;width:1px;height:831px;background:#e4e4e4"></div>
<div class="abs" style="left:1424px;top:154px;width:31px;height:1px;background:#e2e2e2"></div>
<svg style="left:1433px;top:121px" width="16" height="16" viewBox="0 0 16 16" ><path d="M1 1 L8 8 L1 15 M8 1 L15 8 L8 15" fill="none" stroke="#777" stroke-width="1.3"/></svg>
<svg style="left:1431px;top:176px" width="20" height="17" viewBox="0 0 20 17" ><path d="M1 11 L5.5 0.5 L10 11 M2.6 7.5 H8.4" fill="none" stroke="#666" stroke-width="1.5"/><path d="M12 2.5 H20 M12 6.5 H20 M12 10.5 H20" stroke="#999" stroke-width="1.6"/><path d="M0 15.5 H20" stroke="#666" stroke-width="2"/></svg>
<div class="sl" style="left:1441px;top:200.5px">标题</div>
<svg style="left:1431px;top:231px" width="20" height="17" viewBox="0 0 20 17" ><path d="M10 0.5 C6 0.5 4.5 4 4.5 7 V10.5 L2.5 13 H17.5 L15.5 10.5 V7 C15.5 4 14 0.5 10 0.5 Z" fill="#777"/><circle cx="10" cy="15.2" r="1.6" fill="#999"/><path d="M2.2 2.5 Q0.2 6 2.2 9.5 M17.8 2.5 Q19.8 6 17.8 9.5" fill="none" stroke="#aaa" stroke-width="1"/></svg>
<div class="sl" style="left:1441px;top:255.5px">预警</div>
<svg style="left:1432px;top:286px" width="18" height="18" viewBox="0 0 18 18" ><rect x="0.6" y="0.6" width="16.8" height="16.8" fill="none" stroke="#777" stroke-width="1.2"/><rect x="0" y="0" width="18" height="5.5" fill="#777"/><path d="M6.2 5 V17.5 M11.8 5 V17.5" stroke="#777" stroke-width="1.1"/></svg>
<div class="sl" style="left:1441px;top:311px">表头</div>
<svg style="left:1432px;top:341px" width="18" height="18" viewBox="0 0 18 18" ><rect x="0.6" y="0.6" width="16.8" height="16.8" fill="none" stroke="#777" stroke-width="1.2"/><rect x="0" y="6.5" width="18" height="5" fill="#777"/><path d="M6.2 0 V18 M11.8 0 V18" stroke="#777" stroke-width="1.1"/></svg>
<div class="sl" style="left:1441px;top:366.5px">表行</div>
<svg style="left:1432px;top:397px" width="18" height="18" viewBox="0 0 18 18" ><rect x="0.6" y="0.6" width="16.8" height="16.8" fill="none" stroke="#777" stroke-width="1.2"/><rect x="6.5" y="0" width="5" height="18" fill="#777"/><path d="M0 6.2 H18 M0 11.8 H18" stroke="#777" stroke-width="1.1"/></svg>
<div class="sl" style="left:1441px;top:422px">表列</div>
<svg style="left:1432px;top:452px" width="18" height="18" viewBox="0 0 18 18" ><rect x="0.6" y="0.6" width="16.8" height="16.8" fill="none" stroke="#777" stroke-width="1.2"/><path d="M6.2 0 V18 M11.8 0 V18 M0 6.2 H18 M0 11.8 H18" stroke="#777" stroke-width="1.1"/></svg>
<div class="sl" style="left:1441px;top:477px">网格</div>
<svg style="left:1432px;top:508px" width="19" height="18" viewBox="0 0 19 18" ><path d="M7 16.2 H0.8 V0.8 H16.2 V6" fill="none" stroke="#1da6e8" stroke-width="1.5"/><rect x="0" y="0" width="17" height="4.5" fill="#1da6e8"/><circle cx="13.2" cy="12" r="5.6" fill="#1da6e8"/><circle cx="13.2" cy="12" r="2" fill="#fff"/></svg>
<div class="sl" style="left:1441px;top:533px;color:#1da6e8">设置</div>
<svg style="left:1431px;top:562px" width="20" height="19" viewBox="0 0 20 19" ><rect x="0" y="0" width="7.5" height="7.5" rx="1.5" fill="#777"/><path d="M9 2.5 Q15.5 2.5 15.5 7.5" fill="none" stroke="#aaa" stroke-width="1"/><circle cx="15" cy="11.5" r="2.3" fill="#777"/><path d="M11 19 Q11 14.5 15 14.5 Q19 14.5 19 19 Z" fill="#777"/><path d="M9.5 17 Q4 17 4 11 M2.3 12.8 L4 10.6 L5.8 12.6" fill="none" stroke="#aaa" stroke-width="1"/></svg>
<div class="sl" style="left:1441px;top:588.5px">交互</div>
<svg style="left:1431px;top:619px" width="20" height="18" viewBox="0 0 20 18" ><rect x="0" y="0" width="20" height="18" fill="#8c8c8c"/><g fill="#e6e6e6"><rect x="1" y="1.5" width="2" height="2.2"/><rect x="1" y="5.8" width="2" height="2.2"/><rect x="1" y="10.1" width="2" height="2.2"/><rect x="1" y="14.4" width="2" height="2.2"/><rect x="17" y="1.5" width="2" height="2.2"/><rect x="17" y="5.8" width="2" height="2.2"/><rect x="17" y="10.1" width="2" height="2.2"/><rect x="17" y="14.4" width="2" height="2.2"/></g><path d="M7.5 4.5 L14 9 L7.5 13.5 Z" fill="#fff"/></svg>
<div class="sl" style="left:1441px;top:644px">动态</div>
<svg style="left:1432px;top:674px" width="19" height="18" viewBox="0 0 19 18" ><path d="M3 0 V18 M0 15.5 H19" stroke="#777" stroke-width="1.1" fill="none"/><rect x="5.5" y="3" width="3" height="11.5" fill="#999"/><rect x="10" y="7" width="3" height="7.5" fill="#aaa"/><rect x="14.5" y="5" width="3" height="9.5" fill="#999"/></svg>
<div class="sl" style="left:1441px;top:699px">图表</div>
<svg style="left:1431px;top:728px" width="20" height="19" viewBox="0 0 20 19" ><path d="M10 0 L20 5.5 L10 11 L0 5.5 Z" fill="#777"/><path d="M0.5 9 L10 14.2 L19.5 9 M0.5 12.8 L10 18 L19.5 12.8" fill="none" stroke="#999" stroke-width="1.1"/></svg>
<div class="sl" style="left:1441px;top:755.5px">容器</div>
<svg style="left:1432px;top:785px" width="18" height="18" viewBox="0 0 18 18" ><rect x="0.6" y="1.2" width="16.8" height="12.6" fill="none" stroke="#999" stroke-width="1.2"/><rect x="3" y="3.5" width="12" height="8" fill="#777"/><path d="M9 0 V1.5 M2.5 16.5 H15.5 M5.5 14 L4 17.5 M12.5 14 L14 17.5" stroke="#999" stroke-width="1.1"/></svg>
<div class="sl" style="left:1441px;top:810px">报表</div>
<div class="abs" style="left:1462px;top:99px;width:238px;height:831px;background:#fafafa"></div>
<div class="abs" style="left:1462px;top:99px;width:238px;height:118px;background:#fff;border-bottom:1px solid #e2e2e2"></div>
<div class="abs" style="left:1462px;top:218px;width:238px;height:5px;background:#f3f3f3"></div>
<div class="abs" style="left:1462px;top:223px;width:238px;height:39px;background:#fff;border-bottom:1px solid #e2e2e2"></div>
<div class="abs" style="left:1462px;top:262px;width:238px;height:4px;background:#f3f3f3"></div>
<div class="abs" style="left:1462px;top:266px;width:238px;height:37px;background:#fff"></div>
<div class="abs" style="left:1462px;top:303px;width:238px;height:78px;background:#f3f2f2"></div>
<div class="abs" style="left:1468px;top:309px;width:226px;height:65px;background:#fff;border-radius:3px"></div>
<div class="abs" style="left:1462px;top:381px;width:238px;height:34px;background:#fff"></div>
<div class="abs" style="left:1462px;top:415px;width:238px;height:76px;background:#f3f2f2"></div>
<div class="abs" style="left:1468px;top:421px;width:226px;height:64px;background:#fff;border-radius:3px"></div>
<div class="abs" style="left:1462px;top:491px;width:238px;height:77px;background:#fff;border-bottom:1px solid #dedede"></div>
<div class="abs" style="left:1462px;top:569px;width:238px;height:4px;background:#f5f5f5"></div>
<div class="abs" style="left:1462px;top:573px;width:238px;height:107px;background:#fff"></div>
<div class="rl" style="left:1472px;top:112.0px;font-size:12.64px">自适应</div>
<div class="tog on" style="top:111px"></div>
<div class="rl" style="left:1472px;top:153.0px;font-size:12.64px">隐藏简表滚动轴</div>
<div class="tog" style="top:151.5px"></div>
<div class="rl b" style="left:1472px;top:193.0px;font-size:14.51px">折叠简表</div>
<div class="cb" style="top:192px"></div>
<svg style="left:1678px;top:192.5px" width="7" height="14" viewBox="0 0 7 14" ><path d="M0.8 0.8 L6 7 L0.8 13.2" fill="none" stroke="#555" stroke-width="1.2"/></svg>
<div class="rl b" style="left:1472px;top:235.5px;font-size:14.51px">表格分页</div>
<div class="cb" style="top:234.5px"></div>
<svg style="left:1678px;top:235px" width="7" height="14" viewBox="0 0 7 14" ><path d="M0.8 0.8 L6 7 L0.8 13.2" fill="none" stroke="#555" stroke-width="1.2"/></svg>
<div class="rl b" style="left:1472px;top:279.0px;font-size:14.51px">冻结列</div>
<svg style="left:1675.0px;top:281.5px" width="14" height="7" viewBox="0 0 14 7" ><path d="M0.6 0.6 L7.0 6.2 L13.4 0.6" fill="none" stroke="#666" stroke-width="1.2"/></svg>
<div class="rl" style="left:1477px;top:320.5px;font-size:12.64px">结束列</div>
<div class="abs" style="left:1477px;top:341.5px;width:208px;height:24px;background:#f8f8f8;border:1px solid #f2f2f2;border-radius:3px"></div>
<svg style="left:1667.0px;top:351.5px" width="10" height="5" viewBox="0 0 10 5" ><path d="M0.6 0.6 L5.0 4.2 L9.4 0.6" fill="none" stroke="#bbb" stroke-width="1.2"/></svg>
<div class="rl b" style="left:1472px;top:391.0px;font-size:14.51px">移动端冻结列</div>
<svg style="left:1675.0px;top:393.5px" width="14" height="7" viewBox="0 0 14 7" ><path d="M0.6 0.6 L7.0 6.2 L13.4 0.6" fill="none" stroke="#666" stroke-width="1.2"/></svg>
<div class="rl" style="left:1477px;top:432.0px;font-size:12.64px">结束列</div>
<div class="abs" style="left:1477px;top:453px;width:208px;height:24px;background:#f8f8f8;border:1px solid #f2f2f2;border-radius:3px"></div>
<svg style="left:1667.0px;top:463.0px" width="10" height="5" viewBox="0 0 10 5" ><path d="M0.6 0.6 L5.0 4.2 L9.4 0.6" fill="none" stroke="#bbb" stroke-width="1.2"/></svg>
<div class="rl" style="left:1472px;top:503.5px;font-size:12.64px">隐藏度量值</div>
<div class="tog" style="top:502px"></div>
<div class="rl b" style="left:1472px;top:543.0px;font-size:14.51px">行列转置模式</div>
<div class="cb" style="top:542.5px"></div>
<svg style="left:1678px;top:543px" width="7" height="14" viewBox="0 0 7 14" ><path d="M0.8 0.8 L6 7 L0.8 13.2" fill="none" stroke="#555" stroke-width="1.2"/></svg>
<div class="rl" style="left:1472px;top:586.0px;font-size:12.64px;color:#666">列属性绑定类型</div>
<div class="abs" style="left:1471px;top:608.5px;width:220px;height:24px;background:#f6f6f6;border-radius:3px"></div>
<div class="rl" style="left:1485px;top:614.0px;font-size:12.64px">按名称</div>
<svg style="left:1673.5px;top:618.5px" width="9" height="5" viewBox="0 0 9 5" ><path d="M0.6 0.6 L4.5 4.2 L8.4 0.6" fill="none" stroke="#aaa" stroke-width="1.2"/></svg>
<div class="rl" style="left:1472px;top:653.0px;font-size:12.64px">手机浏览模式</div>
<div class="tog" style="top:651.5px"></div>
<div class="abs" style="left:0;top:932px;width:1771px;height:1px;background:rgba(0,0,0,.3)"></div>
<div class="abs" style="left:71px;top:931.5px;width:1629px;height:1.5px;background:#1c2c3c"></div>
<div class="t" style="left:1586px;top:906px;font-size:16.5px;font-family:'Liberation Sans',sans-serif;background:linear-gradient(90deg,#a6a6a6 0,#a6a6a6 114px,#cfdcdc 114px);-webkit-background-clip:text;background-clip:text;color:transparent">CSDN @qq_43696218</div>
</body></html>
